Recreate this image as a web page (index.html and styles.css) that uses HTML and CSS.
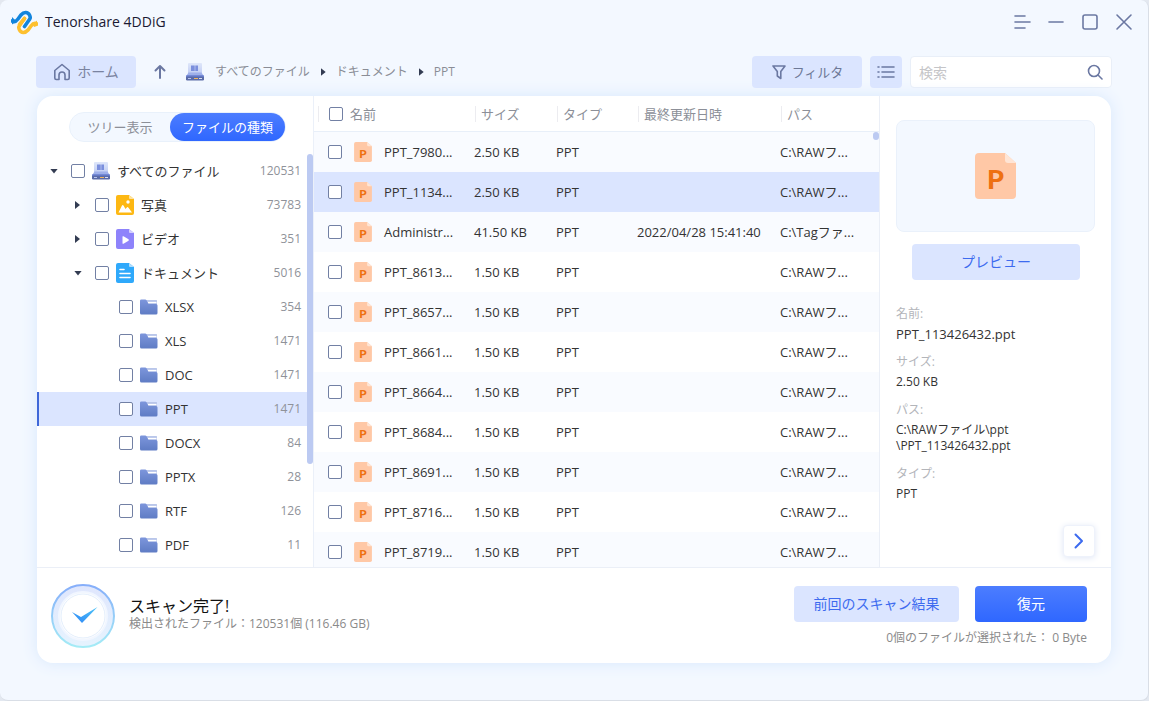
FILE: index.html
```html
<!DOCTYPE html>
<html lang="ja">
<head>
    <meta charset="UTF-8">
    <meta name="viewport" content="width=device-width, initial-scale=1.0">
    <title>Tenorshare 4DDiG</title>
    <link rel="stylesheet" href="styles.css">
</head>
<body>
    <!-- Shared icons -->
    <svg class="defs" width="0" height="0" aria-hidden="true">
        <defs>
            <linearGradient id="folderFill" x1="0" y1="0" x2="0" y2="1">
                <stop offset="0" stop-color="#7d96dc" />
                <stop offset="1" stop-color="#5f7cc4" />
            </linearGradient>
            <linearGradient id="driveTop" x1="0" y1="0" x2="0" y2="1">
                <stop offset="0" stop-color="#dfe7fa" />
                <stop offset="1" stop-color="#c3cff4" />
            </linearGradient>
            <linearGradient id="ring" x1="0" y1="0" x2="0" y2="1">
                <stop offset="0" stop-color="#86aefa" />
                <stop offset="1" stop-color="#a5ecf6" />
            </linearGradient>
            <linearGradient id="ringFill" x1="0" y1="0" x2="0" y2="1">
                <stop offset="0" stop-color="#dfe6fd" />
                <stop offset="1" stop-color="#e6f3fe" />
            </linearGradient>
            <linearGradient id="tick" x1="0" y1="1" x2="1" y2="0">
                <stop offset="0" stop-color="#2f86f6" />
                <stop offset="1" stop-color="#4cc4f7" />
            </linearGradient>
        </defs>
        <symbol id="drive" viewBox="0 0 18 18">
            <path d="M3 0h12q1 0 1 1v9H2V1q0-1 1-1z" fill="url(#driveTop)" />
            <path d="M5 2.500h3.700V8H5zM9.300 2.500H12V8H9.300z" fill="#7b8fdd" />
            <path d="M2.500 9.500h13L18 13.500H0z" fill="#9fb0ea" />
            <rect x="0" y="12.500" width="18" height="5" rx="1.200" fill="#5a6ba8" />
            <path d="M0 13h18" stroke="#6f86e0" />
            <path d="M2 15.500h3" stroke="#b9c6f0" />
            <path d="M8 15.500h4" stroke="#f3b562" />
            <path d="M13 15.500h3" stroke="#d9e0f5" />
        </symbol>
        <symbol id="folder" viewBox="0 0 18 16">
            <path d="M6 1h10.500q.5 0 .5.500V8H6z" fill="#b9c6ea" />
            <path d="M8 3.500h8.500" stroke="#fff" stroke-width="1.200" />
            <path d="M0 1.800Q0 .5 1.300.5h4q.8 0 1.200.8L8.500 5H16q1.500 0 1.500 1.500v7.500q0 1.500-1.500 1.500H1.500Q0 15.500 0 14z" fill="url(#folderFill)" />
        </symbol>
        <symbol id="photo" viewBox="0 0 18 20">
            <path d="M2 0h11l5 4v14q0 2-2 2H2q-2 0-2-2V2Q0 0 2 0z" fill="#fdb813" />
            <path d="M13 0l5 4h-4q-1 0-1-1z" fill="#fee3a1" />
            <circle cx="12" cy="7" r="1.700" fill="#fff" />
            <path d="M2.500 17.500L6 10.500q.7-1.200 1.500 0L9.500 14l1.300-1.500q.8-.8 1.500 0l3.700 5z" fill="#fff" />
        </symbol>
        <symbol id="video" viewBox="0 0 18 20">
            <path d="M2 0h11l5 4v14q0 2-2 2H2q-2 0-2-2V2Q0 0 2 0z" fill="#8e83fb" />
            <path d="M13 0l5 4h-4q-1 0-1-1z" fill="#d4cffe" />
            <path d="M6.500 7.500v7q.2.600 1 .2l5-3q.8-.7 0-1.400l-5-3q-.8-.4-1 .2z" fill="#fff" />
        </symbol>
        <symbol id="doc" viewBox="0 0 18 20">
            <path d="M2 0h11l5 4v14q0 2-2 2H2q-2 0-2-2V2Q0 0 2 0z" fill="#2fa9fb" />
            <path d="M13 0l5 4h-4q-1 0-1-1z" fill="#b0defe" />
            <path d="M4 6.500h4M4 10.500h10M4 14.500h10" stroke="#fff" stroke-width="1.600" stroke-linecap="round" />
        </symbol>
        <symbol id="ppt" viewBox="0 0 41 46">
            <path d="M4 0h26l11 10v32q0 4-4 4H4q-4 0-4-4V4Q0 0 4 0z" fill="#ffc8a6" />
            <path d="M30 0l11 10h-8q-3 0-3-3z" fill="#ffe5d5" />
            <text x="20.500" y="36" text-anchor="middle" font-family="Lato, sans-serif" font-weight="900" font-size="27" fill="#ee7011">P</text>
        </symbol>
    </svg>

    <div class="window">
        <header class="titlebar">
            <svg class="logo" viewBox="0 0 27 25" width="27" height="25" fill="none" stroke-width="3.600">
                <path d="M26 14Q23 12 20 16L17 20C14 23.500 10 23 8.500 20S8 16 10 13.500L13.500 8.500" stroke="#fdc02f" stroke-linecap="round" />
                <path d="M26 10.500L22 14l1 3 3-1z" fill="#fdc02f" />
                <path d="M1 11Q4 13 7 9L10 5C13 1.500 17 2 18.500 5S19 9 17 11.500L13.500 16.500" stroke="#1285dd" stroke-linecap="round" />
                <path d="M8.500 14.500L13.500 8.500" stroke="#fdc02f" stroke-linecap="round" />
                <path d="M1 7l3 3-1 3-2 1.500z" fill="#1285dd" />
            </svg>
            <h1>Tenorshare 4DDiG</h1>
            <div class="window-buttons">
                <button type="button" aria-label="メニュー">
                    <svg viewBox="0 0 18 18" width="18" height="18"><path d="M2 3h10M2 9h15M2 15h10" /></svg>
                </button>
                <button type="button" aria-label="最小化">
                    <svg viewBox="0 0 18 18" width="18" height="18"><path d="M2 9h14" /></svg>
                </button>
                <button type="button" aria-label="最大化">
                    <svg viewBox="0 0 18 18" width="18" height="18"><rect x="2" y="2" width="14" height="14" rx="2" /></svg>
                </button>
                <button type="button" aria-label="閉じる">
                    <svg viewBox="0 0 18 18" width="18" height="18"><path d="M2 2l14 14M16 2L2 16" /></svg>
                </button>
            </div>
        </header>

        <div class="toolbar">
            <button type="button" class="tool-btn home">
                <svg viewBox="0 0 18 18" width="18" height="18"><path d="M1.800 7.500L9 1.500l7.200 6V15q0 1.500-1.500 1.500H12V12q0-3-3-3t-3 3v4.500H3.300q-1.500 0-1.500-1.500z" /></svg>
                <span>ホーム</span>
            </button>
            <button type="button" class="up" aria-label="上へ">
                <svg viewBox="0 0 12 16" width="12" height="16"><path d="M6 14V2M1.500 6.500L6 2l4.500 4.500" /></svg>
            </button>
            <nav class="breadcrumb">
                <svg width="18" height="18"><use href="#drive" /></svg>
                <a href="#">すべてのファイル</a>
                <span class="arrow"></span>
                <a href="#">ドキュメント</a>
                <span class="arrow"></span>
                <a href="#">PPT</a>
            </nav>
            <button type="button" class="tool-btn filter">
                <svg viewBox="0 0 16 16" width="16" height="16"><path d="M2 2h12L9.800 7.500V14.500L6.300 12V7.500z" /></svg>
                <span>フィルタ</span>
            </button>
            <button type="button" class="tool-btn list" aria-label="リスト表示">
                <svg viewBox="0 0 18 14" width="18" height="14"><path d="M5 2h12M5 7h12M5 12h12M1 2h1M1 7h1M1 12h1" /></svg>
            </button>
            <div class="search">
                <input type="text" placeholder="検索" aria-label="検索">
                <button type="button" aria-label="検索する">
                    <svg viewBox="0 0 16 16" width="16" height="16"><circle cx="7" cy="7" r="5.500" /><path d="M11 11l4 4" /></svg>
                </button>
            </div>
        </div>

        <main class="panel">
            <div class="content">
                <aside class="sidebar">
                    <div class="switch">
                        <button type="button">ツリー表示</button>
                        <button type="button" class="active">ファイルの種類</button>
                    </div>
                    <div class="tree-wrap">
                        <ul class="tree">
                            <li class="level1">
                                <span class="arrow open"></span>
                                <input type="checkbox" id="t0">
                                <svg width="18" height="18"><use href="#drive" /></svg>
                                <label for="t0">すべてのファイル</label>
                                <span class="count">120531</span>
                            </li>
                            <li class="level2">
                                <span class="arrow"></span>
                                <input type="checkbox" id="t1">
                                <svg width="18" height="20"><use href="#photo" /></svg>
                                <label for="t1">写真</label>
                                <span class="count">73783</span>
                            </li>
                            <li class="level2">
                                <span class="arrow"></span>
                                <input type="checkbox" id="t2">
                                <svg width="18" height="20"><use href="#video" /></svg>
                                <label for="t2">ビデオ</label>
                                <span class="count">351</span>
                            </li>
                            <li class="level2">
                                <span class="arrow open"></span>
                                <input type="checkbox" id="t3">
                                <svg width="18" height="20"><use href="#doc" /></svg>
                                <label for="t3">ドキュメント</label>
                                <span class="count">5016</span>
                            </li>
                            <li class="level3">
                                <input type="checkbox" id="t4">
                                <svg width="18" height="16"><use href="#folder" /></svg>
                                <label for="t4">XLSX</label>
                                <span class="count">354</span>
                            </li>
                            <li class="level3">
                                <input type="checkbox" id="t5">
                                <svg width="18" height="16"><use href="#folder" /></svg>
                                <label for="t5">XLS</label>
                                <span class="count">1471</span>
                            </li>
                            <li class="level3">
                                <input type="checkbox" id="t6">
                                <svg width="18" height="16"><use href="#folder" /></svg>
                                <label for="t6">DOC</label>
                                <span class="count">1471</span>
                            </li>
                            <li class="level3 selected">
                                <input type="checkbox" id="t7">
                                <svg width="18" height="16"><use href="#folder" /></svg>
                                <label for="t7">PPT</label>
                                <span class="count">1471</span>
                            </li>
                            <li class="level3">
                                <input type="checkbox" id="t8">
                                <svg width="18" height="16"><use href="#folder" /></svg>
                                <label for="t8">DOCX</label>
                                <span class="count">84</span>
                            </li>
                            <li class="level3">
                                <input type="checkbox" id="t9">
                                <svg width="18" height="16"><use href="#folder" /></svg>
                                <label for="t9">PPTX</label>
                                <span class="count">28</span>
                            </li>
                            <li class="level3">
                                <input type="checkbox" id="t10">
                                <svg width="18" height="16"><use href="#folder" /></svg>
                                <label for="t10">RTF</label>
                                <span class="count">126</span>
                            </li>
                            <li class="level3">
                                <input type="checkbox" id="t11">
                                <svg width="18" height="16"><use href="#folder" /></svg>
                                <label for="t11">PDF</label>
                                <span class="count">11</span>
                            </li>
                        </ul>
                        <div class="scrollbar"></div>
                    </div>
                </aside>

                <section class="files">
                    <table>
                        <colgroup>
                            <col class="col-name">
                            <col class="col-size">
                            <col class="col-type">
                            <col class="col-date">
                            <col>
                        </colgroup>
                        <thead>
                            <tr>
                                <th><div class="head first"><input type="checkbox" id="all"><label for="all">名前</label></div></th>
                                <th><div class="head">サイズ</div></th>
                                <th><div class="head">タイプ</div></th>
                                <th><div class="head">最終更新日時</div></th>
                                <th><div class="head">パス</div></th>
                            </tr>
                        </thead>
                        <tbody>
                            <tr>
                                <td><div class="name"><input type="checkbox" id="f1"><svg width="18" height="20"><use href="#ppt" /></svg><label for="f1">PPT_7980...</label></div></td>
                                <td>2.50 KB</td><td>PPT</td><td></td><td>C:\RAWフ...</td>
                            </tr>
                            <tr class="selected">
                                <td><div class="name"><input type="checkbox" id="f2"><svg width="18" height="20"><use href="#ppt" /></svg><label for="f2">PPT_1134...</label></div></td>
                                <td>2.50 KB</td><td>PPT</td><td></td><td>C:\RAWフ...</td>
                            </tr>
                            <tr>
                                <td><div class="name"><input type="checkbox" id="f3"><svg width="18" height="20"><use href="#ppt" /></svg><label for="f3">Administr...</label></div></td>
                                <td>41.50 KB</td><td>PPT</td><td>2022/04/28 15:41:40</td><td>C:\Tagファ...</td>
                            </tr>
                            <tr>
                                <td><div class="name"><input type="checkbox" id="f4"><svg width="18" height="20"><use href="#ppt" /></svg><label for="f4">PPT_8613...</label></div></td>
                                <td>1.50 KB</td><td>PPT</td><td></td><td>C:\RAWフ...</td>
                            </tr>
                            <tr>
                                <td><div class="name"><input type="checkbox" id="f5"><svg width="18" height="20"><use href="#ppt" /></svg><label for="f5">PPT_8657...</label></div></td>
                                <td>1.50 KB</td><td>PPT</td><td></td><td>C:\RAWフ...</td>
                            </tr>
                            <tr>
                                <td><div class="name"><input type="checkbox" id="f6"><svg width="18" height="20"><use href="#ppt" /></svg><label for="f6">PPT_8661...</label></div></td>
                                <td>1.50 KB</td><td>PPT</td><td></td><td>C:\RAWフ...</td>
                            </tr>
                            <tr>
                                <td><div class="name"><input type="checkbox" id="f7"><svg width="18" height="20"><use href="#ppt" /></svg><label for="f7">PPT_8664...</label></div></td>
                                <td>1.50 KB</td><td>PPT</td><td></td><td>C:\RAWフ...</td>
                            </tr>
                            <tr>
                                <td><div class="name"><input type="checkbox" id="f8"><svg width="18" height="20"><use href="#ppt" /></svg><label for="f8">PPT_8684...</label></div></td>
                                <td>1.50 KB</td><td>PPT</td><td></td><td>C:\RAWフ...</td>
                            </tr>
                            <tr>
                                <td><div class="name"><input type="checkbox" id="f9"><svg width="18" height="20"><use href="#ppt" /></svg><label for="f9">PPT_8691...</label></div></td>
                                <td>1.50 KB</td><td>PPT</td><td></td><td>C:\RAWフ...</td>
                            </tr>
                            <tr>
                                <td><div class="name"><input type="checkbox" id="f10"><svg width="18" height="20"><use href="#ppt" /></svg><label for="f10">PPT_8716...</label></div></td>
                                <td>1.50 KB</td><td>PPT</td><td></td><td>C:\RAWフ...</td>
                            </tr>
                            <tr>
                                <td><div class="name"><input type="checkbox" id="f11"><svg width="18" height="20"><use href="#ppt" /></svg><label for="f11">PPT_8719...</label></div></td>
                                <td>1.50 KB</td><td>PPT</td><td></td><td>C:\RAWフ...</td>
                            </tr>
                        </tbody>
                    </table>
                    <div class="scroll-dot"></div>
                </section>

                <aside class="details">
                    <div class="preview">
                        <svg width="41" height="46"><use href="#ppt" /></svg>
                    </div>
                    <button type="button" class="soft-btn preview-btn">プレビュー</button>
                    <dl>
                        <dt>名前:</dt>
                        <dd class="file-name">PPT_113426432.ppt</dd>
                        <dt>サイズ:</dt>
                        <dd>2.50 KB</dd>
                        <dt>パス:</dt>
                        <dd>C:\RAWファイル\ppt<br>\PPT_113426432.ppt</dd>
                        <dt>タイプ:</dt>
                        <dd>PPT</dd>
                    </dl>
                    <button type="button" class="next" aria-label="次へ">
                        <svg viewBox="0 0 10 16" width="10" height="16"><path d="M1.500 1.500L8 8l-6.500 6.500" /></svg>
                    </button>
                </aside>
            </div>

            <footer class="footer">
                <svg class="done" viewBox="0 0 64 64" width="64" height="64">
                    <circle cx="32" cy="32" r="31" fill="url(#ringFill)" stroke="url(#ring)" stroke-width="2" />
                    <circle cx="32" cy="32" r="24" fill="#fff" stroke="#f1f6ff" stroke-width="2" />
                    <circle cx="32" cy="32" r="22" fill="none" stroke="#e3eefc" />
                    <path d="M21 28l9 5L46.500 23 31 39z" fill="url(#tick)" />
                </svg>
                <div class="status">
                    <h2>スキャン完了!</h2>
                    <p>検出されたファイル：120531個 (116.46 GB)</p>
                </div>
                <div class="actions">
                    <div class="action-row">
                        <button type="button" class="soft-btn last-scan">前回のスキャン結果</button>
                        <button type="button" class="restore">復元</button>
                    </div>
                    <p>0個のファイルが選択された： 0 Byte</p>
                </div>
            </footer>
        </main>
    </div>
</body>
</html>
```
FILE: styles.css
```css
* {
    box-sizing: border-box;
}

body {
    margin: 0;
    background-color: #e3e8f0;
    font-family: "Open Sans", "Noto Sans CJK JP", sans-serif;
    font-size: 13px;
    line-height: 16px;
    color: #333;
}

.defs {
    position: absolute;
    overflow: visible;
}

button {
    border: none;
    padding: 0;
    background: none;
    font-family: inherit;
    font-size: 14px;
    line-height: inherit;
    cursor: pointer;
}

button svg {
    display: block;
    fill: none;
    stroke: #6b78a2;
    stroke-width: 1.6;
    stroke-linecap: round;
    stroke-linejoin: round;
}

h1, h2, p, dl, dd, ul {
    margin: 0;
    padding: 0;
}

input[type="checkbox"] {
    appearance: none;
    flex: none;
    width: 14px;
    height: 14px;
    margin: 0;
    border: 1px solid #7280a4;
    border-radius: 2px;
    background-color: #fff;
}

input[type="checkbox"]:checked {
    background-color: #3f74ff;
}

.window {
    display: flex;
    flex-direction: column;
    height: 100vh;
    border: solid #d9dee6;
    border-width: 0 1px 1px 0;
    border-radius: 8px;
    background-color: #f3f8ff;
    overflow: hidden;
}

/* title bar */
.titlebar {
    display: flex;
    align-items: center;
    height: 46px;
    padding: 0 15px 2px 11px;
}

.titlebar h1 {
    flex: 1;
    margin-left: 7px;
    font-size: 14px;
    font-weight: 400;
    line-height: 18px;
    color: #1a1a33;
}

.window-buttons {
    display: flex;
    gap: 16px;
}

/* toolbar */
.toolbar {
    display: flex;
    align-items: center;
    height: 50px;
    padding: 2px 36px 0 36px;
}

.tool-btn {
    display: flex;
    align-items: center;
    justify-content: center;
    height: 32px;
    border-radius: 4px;
    background-color: #dbe5ff;
    color: #6d7896;
}

.home {
    gap: 6px;
    width: 100px;
    color: #7a83a0;
}

.up {
    margin: 0 20px 0 18px;
}

.up svg {
    stroke-width: 2;
}

.breadcrumb {
    display: flex;
    flex: 1;
    align-items: center;
    font-size: 12px;
}

.breadcrumb a {
    margin: 0 11px;
    color: #8a8d96;
    text-decoration: none;
}

.breadcrumb a + .arrow {
    margin-right: -1px;
}

.arrow {
    flex: none;
    width: 5px;
    height: 8px;
    background-color: #333c52;
    clip-path: polygon(0 0, 100% 50%, 0 100%);
}

.arrow.open {
    width: 8px;
    height: 5px;
    clip-path: polygon(0 0, 100% 0, 50% 100%);
}

.filter {
    gap: 5px;
    width: 110px;
    font-size: 13px;
}

.list {
    width: 32px;
    margin: 0 8px;
}

.search {
    display: flex;
    align-items: center;
    width: 202px;
    height: 32px;
    padding: 0 8px;
    border: 1px solid #e9eff8;
    border-radius: 4px;
    background-color: #fff;
}

.search input {
    flex: 1;
    min-width: 0;
    padding: 0;
    border: none;
    outline: none;
    font-family: inherit;
    font-size: 14px;
}

.search input::placeholder {
    color: #c5c5c8;
}

/* main panel */
.panel {
    display: flex;
    flex: 1;
    flex-direction: column;
    min-height: 0;
    margin: 0 37px 37px;
    border-radius: 16px;
    background-color: #fff;
    box-shadow: 0 0 16px #d8e8fc;
    overflow: hidden;
}

.content {
    display: flex;
    flex: 1;
    min-height: 0;
    border-bottom: 1px solid #ebeff7;
}

/* sidebar */
.sidebar {
    display: flex;
    flex-direction: column;
    width: 277px;
    border-right: 1px solid #ebf0f9;
}

.switch {
    display: flex;
    height: 30px;
    margin: 16px 27px 12px 32px;
    border: 1px solid #e9f1fb;
    border-radius: 15px;
    background-color: #f3f8ff;
}

.switch button {
    flex: 1;
    border-radius: 14px;
    font-size: 13px;
    color: #8c8f98;
}

.switch .active {
    flex: none;
    width: 115px;
    background: linear-gradient(#4c7dff, #2f67ff);
    color: #fff;
}

.tree-wrap {
    display: flex;
    flex: 1;
    min-height: 0;
    overflow: hidden;
}

.tree {
    flex: 1;
    list-style: none;
}

.tree li {
    display: flex;
    align-items: center;
    height: 34px;
    padding-right: 6px;
    border-left: 2px solid transparent;
}

.tree .selected {
    border-left-color: #3f68d8;
    background-color: #dbe5ff;
}

.tree .arrow {
    margin-right: 13px;
}

.tree .arrow:not(.open) {
    margin: 0 15px 0 1px;
}

.tree svg {
    flex: none;
    margin: 0 7px;
}

.level1 {
    padding-left: 11px;
}

.level2 {
    padding-left: 35px;
}

.level3 {
    padding-left: 80px;
}

.count {
    margin-left: auto;
    font-size: 12px;
    color: #8f9299;
}

.scrollbar {
    width: 6px;
    height: 310px;
    border-radius: 3px;
    background-color: #bccaf2;
}

/* file table */
.files {
    position: relative;
    flex: 1;
    min-width: 0;
    overflow: hidden;
}

table {
    width: 100%;
    border-spacing: 0;
    table-layout: fixed;
}

.col-name {
    width: 160px;
}

.col-size {
    width: 82px;
}

.col-type {
    width: 81px;
}

.col-date {
    width: 143px;
}

th {
    height: 36px;
    padding: 0;
    border-bottom: 1px solid #e8eff9;
    font-weight: 400;
    text-align: left;
    color: #8c8f98;
}

.head {
    height: 16px;
    margin-left: 1px;
    padding-left: 5px;
    border-left: 1px solid #ececf0;
}

.first {
    display: flex;
    align-items: center;
    gap: 7px;
    margin-left: 4px;
    padding-left: 10px;
}

td {
    height: 40px;
    padding: 0;
    white-space: nowrap;
}

tbody tr:nth-child(odd) {
    background-color: #f9fbff;
}

tbody .selected {
    background-color: #dbe5ff;
}

.name {
    display: flex;
    align-items: center;
    gap: 12px;
    padding-left: 14px;
}

.scroll-dot {
    position: absolute;
    top: 36px;
    right: 0;
    width: 6px;
    height: 8px;
    border-radius: 3px;
    background-color: #bccaf2;
}

/* details */
.details {
    display: flex;
    flex-direction: column;
    width: 232px;
    padding: 24px 16px 10px 16px;
    border-left: 1px solid #ebeff7;
}

.preview {
    display: flex;
    align-items: center;
    justify-content: center;
    height: 112px;
    border: 1px solid #eaf1fb;
    border-radius: 8px;
    background-color: #f3f8ff;
}

.soft-btn {
    height: 36px;
    border-radius: 4px;
    background-color: #dbe5ff;
    color: #3d6bef;
}

.preview-btn {
    margin: 12px 15px 26px 16px;
}

dt {
    font-size: 12px;
    color: #b3b5ba;
}

dd {
    margin: 4px 0 12px;
    font-size: 12px;
}

.file-name {
    font-size: 13px;
}

.next {
    display: flex;
    align-items: center;
    justify-content: center;
    align-self: flex-end;
    width: 32px;
    height: 32px;
    margin-top: auto;
    border: 1px solid #eef2fb;
    border-radius: 4px;
    background-color: #fff;
    box-shadow: 0 1px 6px #dfe6f6;
}

.next svg {
    stroke: #3d6bef;
    stroke-width: 2;
}

/* footer */
.footer {
    display: flex;
    align-items: center;
    gap: 14px;
    height: 95px;
    padding: 0 24px 0 14px;
}

.status {
    flex: 1;
    padding-bottom: 4px;
}

.status h2 {
    font-size: 16px;
    font-weight: 400;
    line-height: 20px;
    color: #111;
}

.footer p {
    font-size: 12px;
    color: #8a8a8a;
}

.actions {
    text-align: right;
}

.action-row {
    display: flex;
    justify-content: flex-end;
    gap: 16px;
    margin-bottom: 8px;
}

.last-scan {
    width: 165px;
}

.restore {
    width: 112px;
    height: 36px;
    border-radius: 4px;
    background: linear-gradient(#4c7dff, #2f67ff);
    color: #fff;
}
```
